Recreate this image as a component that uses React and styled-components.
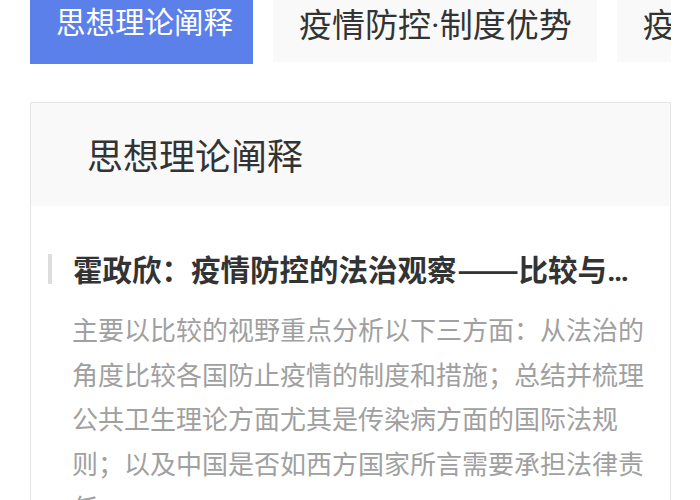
import React from 'react';
import styled, {createGlobalStyle} from 'styled-components';

const GlobalStyle = createGlobalStyle`
    html, body {
        margin: 0;
        padding: 0;
        background: #ffffff;
    }
    body {
        font-family: "Noto Sans CJK SC", "Noto Sans", sans-serif;
        overflow: hidden;
    }
`;

const Page = styled.div`
    width: 641px;
    padding-left: 30px;
    height: 500px;
    overflow: hidden;
`;

const TabStrip = styled.div`
    display: flex;
    align-items: flex-start;
    gap: 20px;
    width: 641px;
    overflow: hidden;
    white-space: nowrap;
`;

const Tab = styled.div`
    flex-shrink: 0;
    box-sizing: border-box;
    padding: ${props => props.active ? '0 20px 0 26px' : '0 25px 0 26px'};
    height: ${props => props.active ? '64px' : '62px'};
    line-height: ${props => props.active ? '46px' : '52px'};
    font-family: "Roboto", "Noto Sans CJK SC", sans-serif;
    font-size: ${props => props.active ? '29.5px' : '33px'};
    color: ${props => props.active ? '#ffffff' : '#333333'};
    background: ${props => props.active ? '#5b80ea' : '#f9f9f9'};
`;

const Card = styled.div`
    margin-top: 38px;
    border: 1px solid #e6e6e6;
    height: 420px;
    background: #ffffff;
`;

const CardHeader = styled.div`
    height: 103px;
    line-height: 103px;
    padding-left: 56px;
    background: #f9f9f9;
    font-size: 36px;
    color: #333333;
`;

const CardBody = styled.div`
    padding: 48px 20px 0 17px;
`;

const ArticleTitle = styled.div`
    display: flex;
    align-items: center;
    height: 30px;
`;

const TitleBar = styled.span`
    flex-shrink: 0;
    width: 4px;
    height: 30px;
    background: #dddddd;
    margin-right: 21px;
`;

const TitleText = styled.span`
    width: 578px;
    font-family: "Roboto", "Noto Sans CJK SC", sans-serif;
    font-size: 29.5px;
    line-height: 30px;
    font-weight: 700;
    color: #333333;
    white-space: nowrap;
    overflow: hidden;
    text-overflow: ellipsis;
`;

const Dash = styled.span`
    display: inline-block;
    width: 62px;
    font-family: "Noto Sans CJK SC", sans-serif;
    transform: scaleX(1.24);
    transform-origin: left center;
`;

const Summary = styled.p`
    margin: 23px 0 0 24px;
    width: 578px;
    font-size: 26px;
    line-height: 44.5px;
    color: #a0a0a0;
`;

const tabs = ['思想理论阐释', '疫情防控·制度优势', '疫情防控·国际合作'];

export default function App() {
    return (
        <Page>
            <GlobalStyle/>
            <TabStrip>
                {tabs.map((t, i) => (
                    <Tab key={t} active={i === 0 ? 1 : 0}>{t}</Tab>
                ))}
            </TabStrip>

            <Card>
                <CardHeader>思想理论阐释</CardHeader>
                <CardBody>
                    <ArticleTitle>
                        <TitleBar/>
                        <TitleText>霍政欣：疫情防控的法治观察<Dash>——</Dash>比较与借鉴</TitleText>
                    </ArticleTitle>
                    <Summary>
                        主要以比较的视野重点分析以下三方面：从法治的角度比较各国防止疫情的制度和措施；总结并梳理公共卫生理论方面尤其是传染病方面的国际法规则；以及中国是否如西方国家所言需要承担法律责任。
                    </Summary>
                </CardBody>
            </Card>
        </Page>
    );
}
